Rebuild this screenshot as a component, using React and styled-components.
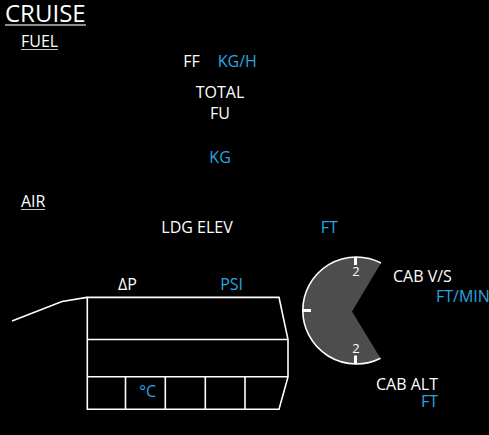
import React from "react";
import styled, { createGlobalStyle } from "styled-components";

const CYAN = "#2aa5e0";

const GlobalStyle = createGlobalStyle`
  body {
    margin: 0;
    background: #000;
    overflow: hidden;
  }
`;

const Display = styled.main`
  min-height: 100vh;
  box-sizing: border-box;
  padding-top: 2px;
  background: #000;
  color: #fff;
  font: 400 16px/21px "Open Sans", "Noto Sans", sans-serif;
  white-space: nowrap;
  overflow: hidden;
`;

const PageTitle = styled.h1`
  width: fit-content;
  margin: 0 0 7px 5px;
  border-bottom: 2px solid #8c8c8c;
  font-size: 24px;
  font-weight: 400;
  line-height: 22px;
`;

const SectionTitle = styled.h2`
  width: fit-content;
  margin: 0 0 1px 21px;
  border-bottom: 1px solid #c4c4c4;
  font-size: 16px;
  font-weight: 400;
  line-height: 16px;
`;

const FuelReadouts = styled.div`
  display: flex;
  flex-direction: column;
  align-items: center;
  padding-right: 10%;
  margin-bottom: 25px;
`;

const FuelFlow = styled.div`
  display: flex;
  gap: 18px;
  margin-bottom: 10px;
`;

const FuelUsed = styled.div`
  margin-bottom: 23px;
  text-align: center;
`;

const Label = styled.span`
  color: #fff;
`;

const Unit = styled.span`
  color: ${CYAN};
`;

const LandingElevation = styled.div`
  display: flex;
  gap: 88px;
  padding: 6px 0 0 33%;
`;

const CabinPanel = styled.div`
  display: grid;
  grid-template-columns: minmax(0, 290fr) minmax(0, 94fr) minmax(0, 105fr);
  padding-top: 16px;
`;

const PressureRow = styled.div`
  display: flex;
  justify-content: space-between;
  padding: 20px 47px 0 118px;
  line-height: 20px;
`;

const Fuselage = styled.div`
  position: relative;
`;

const Drawing = styled.svg`
  display: block;
  width: 100%;
  height: auto;
`;

const ZoneUnit = styled(Unit)`
  position: absolute;
  left: 48%;
  top: 87px;
`;

const CabinReadouts = styled.div`
  display: flex;
  flex-direction: column;
  gap: 70px;
  padding-top: 12px;
`;

const Readout = styled.div`
  display: flex;
  flex-direction: column;
  width: fit-content;
  line-height: ${(p) => (p.$tight ? 17 : 20)}px;
  margin-left: ${(p) => (p.$tight ? -8 : 9)}px;
  align-items: ${(p) => (p.$tight ? "flex-end" : "flex-start")};

  ${Unit} {
    margin-left: ${(p) => (p.$tight ? 0 : 43)}px;
  }
`;

function CabinOutline() {
  return (
    <Drawing viewBox="0 294 290 120" fill="none" stroke="#fff" strokeWidth="1.6" aria-hidden="true">
      <path d="M12 321L62 301.5L87 297.4" />
      <path d="M87.3 297.4H279L288 339.5V377L279 409.2H87.3Z" />
      <path d="M87 339.5H288M87 376.8H288" />
      <path d="M125.5 377V409M165.3 377V409M205.3 377V409M245 377V409" />
    </Drawing>
  );
}

function VerticalSpeedDial() {
  return (
    <Drawing viewBox="290 254 94 112" role="img" aria-label="Cabin vertical speed">
      <path d="M381 263A53.5 53.5 0 1 0 380.5 358.2L352 311.5Z" fill="#4d4d4d" />
      <path d="M381 263A53.5 53.5 0 1 0 380.5 358.2" fill="none" stroke="#fff" strokeWidth="1.6" />
      <path d="M355.5 257V265M355.5 355.5V364M302 310.5H311" stroke="#fff" strokeWidth="3" />
      <g fill="#fff" fontSize="13" textAnchor="middle">
        <text x="356" y="276">2</text>
        <text x="356" y="353">2</text>
      </g>
    </Drawing>
  );
}

export default function App() {
  return (
    <Display>
      <GlobalStyle />
      <PageTitle>CRUISE</PageTitle>

      <section>
        <SectionTitle>FUEL</SectionTitle>
        <FuelReadouts>
          <FuelFlow>
            <Label>FF</Label>
            <Unit>KG/H</Unit>
          </FuelFlow>
          <FuelUsed>
            TOTAL
            <br />
            FU
          </FuelUsed>
          <Unit>KG</Unit>
        </FuelReadouts>
      </section>

      <section>
        <SectionTitle>AIR</SectionTitle>
        <LandingElevation>
          <Label>LDG ELEV</Label>
          <Unit>FT</Unit>
        </LandingElevation>
        <CabinPanel>
          <div>
            <PressureRow>
              <Label>ΔP</Label>
              <Unit>PSI</Unit>
            </PressureRow>
            <Fuselage>
              <CabinOutline />
              <ZoneUnit>°C</ZoneUnit>
            </Fuselage>
          </div>
          <VerticalSpeedDial />
          <CabinReadouts>
            <Readout>
              <Label>CAB V/S</Label>
              <Unit>FT/MIN</Unit>
            </Readout>
            <Readout $tight>
              <Label>CAB ALT</Label>
              <Unit>FT</Unit>
            </Readout>
          </CabinReadouts>
        </CabinPanel>
      </section>
    </Display>
  );
}
